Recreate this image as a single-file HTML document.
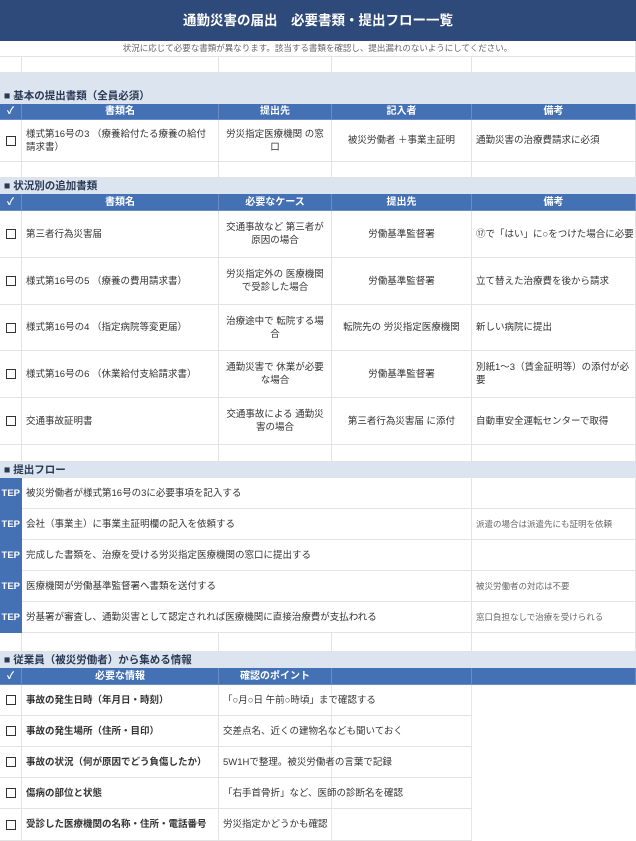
<!DOCTYPE html>
<html><head><meta charset="utf-8"><style>
*{margin:0;padding:0;box-sizing:border-box}
body{width:636px;height:841px;position:relative;background:#fff;font-family:"Liberation Sans","Noto Sans CJK JP",sans-serif;color:#333;font-size:9.5px;overflow:hidden}
.c{position:absolute;display:flex;align-items:center;border-right:1px solid #e3e3e3;border-bottom:1px solid #e3e3e3;padding:0 4px;line-height:13px;overflow:hidden;white-space:normal}
.ctr{justify-content:center;text-align:center}
.h{background:#4470b4;color:#fff;font-weight:bold;justify-content:center;border-color:#6a8cc4;font-size:10px}
.sec{position:absolute;left:0;width:636px;background:#dce4ef;font-weight:bold;color:#2a3a55;font-size:10.5px;padding-left:4px;display:flex;align-items:flex-end;padding-bottom:1px}
.cb{justify-content:center}
.cb span{display:inline-block;width:10px;height:10px;border:1.3px solid #333}
.st{background:#4470b4;color:#fff;font-weight:bold;justify-content:flex-end;padding:0 1px;font-size:9.5px;border-color:#4470b4}
.g{color:#666;font-size:8.5px}
.b{font-weight:bold}
.nw{white-space:nowrap;overflow:visible}
.ln{position:absolute;top:685px;height:156px;width:1px;background:#e8e8e8}
</style></head><body>
<div class="c ctr" style="left:0;top:0;width:636px;height:41px;background:#2e4a7a;color:#fff;font-weight:bold;font-size:13.5px;border:none">通勤災害の届出　必要書類・提出フロー一覧</div>
<div class="c ctr" style="left:0;top:41px;width:636px;height:16px;color:#666;font-size:8.5px">状況に応じて必要な書類が異なります。該当する書類を確認し、提出漏れのないようにしてください。</div>
<div class="c" style="left:0;top:57px;width:22px;height:16px"></div><div class="c" style="left:22px;top:57px;width:197px;height:16px"></div><div class="c" style="left:219px;top:57px;width:113px;height:16px"></div><div class="c" style="left:332px;top:57px;width:140px;height:16px"></div><div class="c" style="left:472px;top:57px;width:164px;height:16px"></div>

<div class="sec" style="top:73px;height:31px">■ 基本の提出書類（全員必須）</div>
<div class="c h" style="left:0;top:104px;width:22px;height:16px">✓</div>
<div class="c h" style="left:22px;top:104px;width:197px;height:16px">書類名</div>
<div class="c h" style="left:219px;top:104px;width:113px;height:16px">提出先</div>
<div class="c h" style="left:332px;top:104px;width:140px;height:16px">記入者</div>
<div class="c h" style="left:472px;top:104px;width:164px;height:16px">備考</div>
<div class="c cb" style="left:0;top:120px;width:22px;height:42px"><span></span></div>
<div class="c" style="left:22px;top:120px;width:197px;height:42px">様式第16号の3 （療養給付たる療養の給付請求書）</div>
<div class="c ctr" style="left:219px;top:120px;width:113px;height:42px">労災指定医療機関 の窓口</div>
<div class="c ctr" style="left:332px;top:120px;width:140px;height:42px">被災労働者 ＋事業主証明</div>
<div class="c" style="left:472px;top:120px;width:164px;height:42px">通勤災害の治療費請求に必須</div>
<div class="c" style="left:0;top:162px;width:22px;height:16px"></div><div class="c" style="left:22px;top:162px;width:197px;height:16px"></div><div class="c" style="left:219px;top:162px;width:113px;height:16px"></div><div class="c" style="left:332px;top:162px;width:140px;height:16px"></div><div class="c" style="left:472px;top:162px;width:164px;height:16px"></div>

<div class="sec" style="top:178px;height:16px">■ 状況別の追加書類</div>
<div class="c h" style="left:0;top:194px;width:22px;height:17px">✓</div>
<div class="c h" style="left:22px;top:194px;width:197px;height:17px">書類名</div>
<div class="c h" style="left:219px;top:194px;width:113px;height:17px">必要なケース</div>
<div class="c h" style="left:332px;top:194px;width:140px;height:17px">提出先</div>
<div class="c h" style="left:472px;top:194px;width:164px;height:17px">備考</div>

<div class="c cb" style="left:0;top:211px;width:22px;height:47px"><span></span></div>
<div class="c" style="left:22px;top:211px;width:197px;height:47px">第三者行為災害届</div>
<div class="c ctr" style="left:219px;top:211px;width:113px;height:47px">交通事故など 第三者が原因の場合</div>
<div class="c ctr" style="left:332px;top:211px;width:140px;height:47px">労働基準監督署</div>
<div class="c nw" style="left:472px;top:211px;width:164px;height:47px">⑰で「はい」に○をつけた場合に必要</div>

<div class="c cb" style="left:0;top:258px;width:22px;height:47px"><span></span></div>
<div class="c" style="left:22px;top:258px;width:197px;height:47px">様式第16号の5 （療養の費用請求書）</div>
<div class="c ctr" style="left:219px;top:258px;width:113px;height:47px">労災指定外の 医療機関で受診した場合</div>
<div class="c ctr" style="left:332px;top:258px;width:140px;height:47px">労働基準監督署</div>
<div class="c" style="left:472px;top:258px;width:164px;height:47px">立て替えた治療費を後から請求</div>

<div class="c cb" style="left:0;top:305px;width:22px;height:46px"><span></span></div>
<div class="c" style="left:22px;top:305px;width:197px;height:46px">様式第16号の4 （指定病院等変更届）</div>
<div class="c ctr" style="left:219px;top:305px;width:113px;height:46px">治療途中で 転院する場合</div>
<div class="c ctr" style="left:332px;top:305px;width:140px;height:46px">転院先の 労災指定医療機関</div>
<div class="c" style="left:472px;top:305px;width:164px;height:46px">新しい病院に提出</div>

<div class="c cb" style="left:0;top:351px;width:22px;height:47px"><span></span></div>
<div class="c" style="left:22px;top:351px;width:197px;height:47px">様式第16号の6 （休業給付支給請求書）</div>
<div class="c ctr" style="left:219px;top:351px;width:113px;height:47px">通勤災害で 休業が必要な場合</div>
<div class="c ctr" style="left:332px;top:351px;width:140px;height:47px">労働基準監督署</div>
<div class="c" style="left:472px;top:351px;width:164px;height:47px">別紙1〜3（賃金証明等）の添付が必要</div>

<div class="c cb" style="left:0;top:398px;width:22px;height:47px"><span></span></div>
<div class="c" style="left:22px;top:398px;width:197px;height:47px">交通事故証明書</div>
<div class="c ctr" style="left:219px;top:398px;width:113px;height:47px">交通事故による 通勤災害の場合</div>
<div class="c ctr" style="left:332px;top:398px;width:140px;height:47px">第三者行為災害届 に添付</div>
<div class="c" style="left:472px;top:398px;width:164px;height:47px">自動車安全運転センターで取得</div>
<div class="c" style="left:0;top:445px;width:22px;height:17px"></div><div class="c" style="left:22px;top:445px;width:197px;height:17px"></div><div class="c" style="left:219px;top:445px;width:113px;height:17px"></div><div class="c" style="left:332px;top:445px;width:140px;height:17px"></div><div class="c" style="left:472px;top:445px;width:164px;height:17px"></div>

<div class="sec" style="top:462px;height:16px">■ 提出フロー</div>
<div class="c st" style="left:0;top:478px;width:22px;height:31px">TEP</div>
<div class="c nw" style="left:22px;top:478px;width:450px;height:31px">被災労働者が様式第16号の3に必要事項を記入する</div>
<div class="c g" style="left:472px;top:478px;width:164px;height:31px"></div>
<div class="c st" style="left:0;top:509px;width:22px;height:31px">TEP</div>
<div class="c nw" style="left:22px;top:509px;width:450px;height:31px">会社（事業主）に事業主証明欄の記入を依頼する</div>
<div class="c g" style="left:472px;top:509px;width:164px;height:31px">派遣の場合は派遣先にも証明を依頼</div>
<div class="c st" style="left:0;top:540px;width:22px;height:31px">TEP</div>
<div class="c nw" style="left:22px;top:540px;width:450px;height:31px">完成した書類を、治療を受ける労災指定医療機関の窓口に提出する</div>
<div class="c g" style="left:472px;top:540px;width:164px;height:31px"></div>
<div class="c st" style="left:0;top:571px;width:22px;height:31px">TEP</div>
<div class="c nw" style="left:22px;top:571px;width:450px;height:31px">医療機関が労働基準監督署へ書類を送付する</div>
<div class="c g" style="left:472px;top:571px;width:164px;height:31px">被災労働者の対応は不要</div>
<div class="c st" style="left:0;top:602px;width:22px;height:31px">TEP</div>
<div class="c nw" style="left:22px;top:602px;width:450px;height:31px">労基署が審査し、通勤災害として認定されれば医療機関に直接治療費が支払われる</div>
<div class="c g" style="left:472px;top:602px;width:164px;height:31px">窓口負担なしで治療を受けられる</div>
<div class="c" style="left:0;top:633px;width:22px;height:19px"></div><div class="c" style="left:22px;top:633px;width:197px;height:19px"></div><div class="c" style="left:219px;top:633px;width:113px;height:19px"></div><div class="c" style="left:332px;top:633px;width:140px;height:19px"></div><div class="c" style="left:472px;top:633px;width:164px;height:19px"></div>

<div class="sec" style="top:652px;height:16px">■ 従業員（被災労働者）から集める情報</div>
<div class="c h" style="left:0;top:668px;width:22px;height:17px">✓</div>
<div class="c h" style="left:22px;top:668px;width:197px;height:17px">必要な情報</div>
<div class="c h" style="left:219px;top:668px;width:113px;height:17px">確認のポイント</div>
<div class="c h" style="left:332px;top:668px;width:140px;height:17px"></div>
<div class="c h" style="left:472px;top:668px;width:164px;height:17px"></div>
<div class="ln" style="left:331px"></div><div class="ln" style="left:471px"></div>

<div class="c cb" style="left:0;top:685px;width:22px;height:31px"><span></span></div>
<div class="c b nw" style="left:22px;top:685px;width:197px;height:31px">事故の発生日時（年月日・時刻）</div>
<div class="c nw" style="left:219px;top:685px;width:253px;height:31px;border-right:none">「○月○日 午前○時頃」まで確認する</div>
<div class="c cb" style="left:0;top:716px;width:22px;height:31px"><span></span></div>
<div class="c b nw" style="left:22px;top:716px;width:197px;height:31px">事故の発生場所（住所・目印）</div>
<div class="c nw" style="left:219px;top:716px;width:253px;height:31px;border-right:none">交差点名、近くの建物名なども聞いておく</div>
<div class="c cb" style="left:0;top:747px;width:22px;height:31px"><span></span></div>
<div class="c b nw" style="left:22px;top:747px;width:197px;height:31px">事故の状況（何が原因でどう負傷したか）</div>
<div class="c nw" style="left:219px;top:747px;width:253px;height:31px;border-right:none">5W1Hで整理。被災労働者の言葉で記録</div>
<div class="c cb" style="left:0;top:778px;width:22px;height:31px"><span></span></div>
<div class="c b nw" style="left:22px;top:778px;width:197px;height:31px">傷病の部位と状態</div>
<div class="c nw" style="left:219px;top:778px;width:253px;height:31px;border-right:none">「右手首骨折」など、医師の診断名を確認</div>
<div class="c cb" style="left:0;top:809px;width:22px;height:32px"><span></span></div>
<div class="c b nw" style="left:22px;top:809px;width:197px;height:32px">受診した医療機関の名称・住所・電話番号</div>
<div class="c nw" style="left:219px;top:809px;width:253px;height:32px;border-right:none">労災指定かどうかも確認</div>
</body></html>
